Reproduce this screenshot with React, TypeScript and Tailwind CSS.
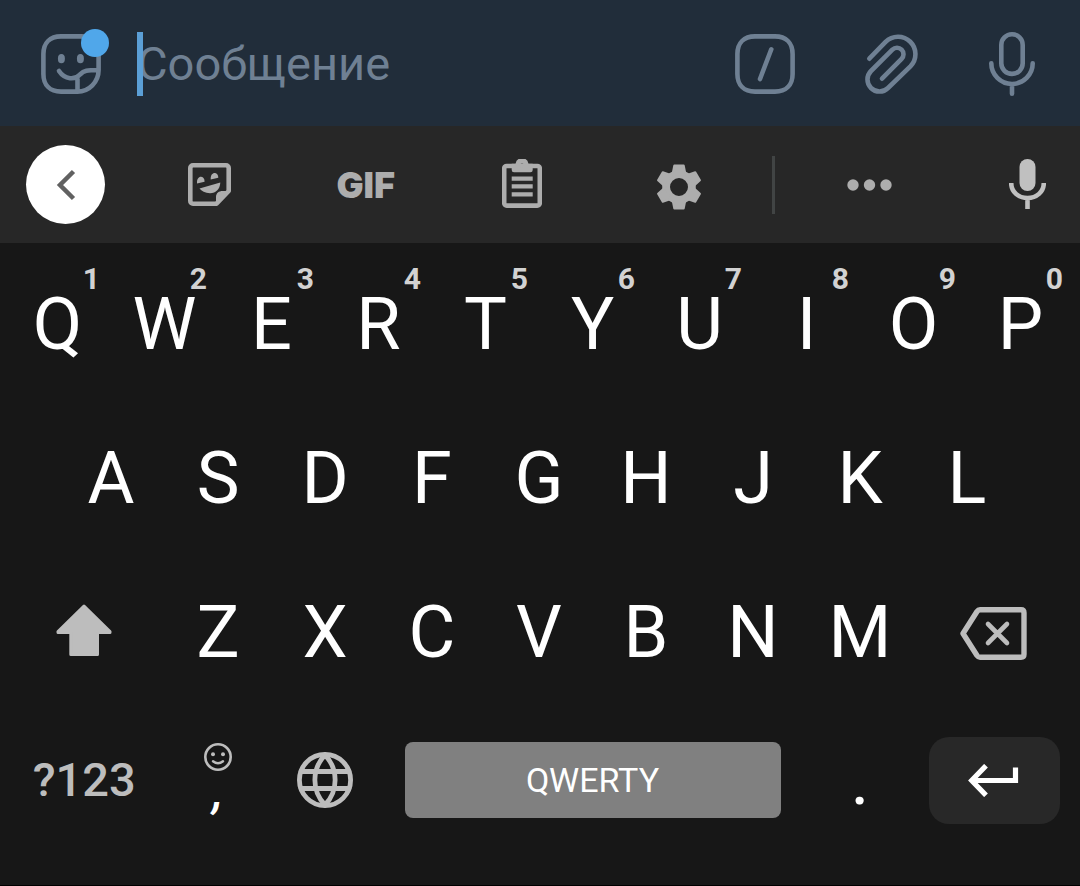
import { useState } from "react";
import type { ReactNode } from "react";
import { clsx } from "clsx";

const TOP_ROW = ["Q", "W", "E", "R", "T", "Y", "U", "I", "O", "P"];
const HOME_ROW = ["A", "S", "D", "F", "G", "H", "J", "K", "L"];
const BOTTOM_ROW = ["Z", "X", "C", "V", "B", "N", "M"];

interface IconProps {
  width: number;
  height: number;
  children: ReactNode;
}

function Icon({ width, height, children }: IconProps) {
  return (
    <svg
      width={width}
      height={height}
      viewBox={`0 0 ${width} ${height}`}
      fill="none"
      stroke="currentColor"
      strokeLinecap="round"
      className="shrink-0"
      aria-hidden="true"
    >
      {children}
    </svg>
  );
}

// Message field icons

function StickerIcon() {
  return (
    <Icon width={60} height={60}>
      <path
        d="M36.5 57.6H20C9 57.6 2.4 51 2.4 40V20C2.4 9 9 2.4 20 2.4H40C51 2.4 57.6 9 57.6 20V36C57.6 48 48 57.6 36.5 57.6V45M18 37C24 46 34 46 39 40.5C43 36.5 46 36 57 36"
        strokeWidth={4.6}
      />
      <g fill="currentColor" stroke="none">
        <ellipse cx={20.4} cy={24.7} rx={3.5} ry={4.6} />
        <ellipse cx={39.4} cy={24.7} rx={3.5} ry={4.6} />
      </g>
    </Icon>
  );
}

function CommandIcon() {
  return (
    <Icon width={60} height={60}>
      <path
        d="M20 2.4H40C51 2.4 57.6 9 57.6 20V40C57.6 51 51 57.6 40 57.6H20C9 57.6 2.4 51 2.4 40V20C2.4 9 9 2.4 20 2.4ZM36.3 15.3L25 45"
        strokeWidth={4.6}
      />
    </Icon>
  );
}

function ClipIcon() {
  return (
    <Icon width={53} height={60}>
      <path
        d="M4.3 24.7L20.6 7.9A17.4 17.4 0 0 1 45.4 32.4L23 54A12 12 0 0 1 6 37L27.4 15.6A6.5 6.5 0 0 1 36.6 24.8L17 44.7"
        strokeWidth={4.6}
      />
    </Icon>
  );
}

function VoiceIcon() {
  return (
    <Icon width={46} height={64}>
      <rect x={12.3} y={2.3} width={21.4} height={39.6} rx={10.7} strokeWidth={4.6} />
      <path d="M2.3 31.3A20.7 20.7 0 0 0 43.7 31.3M23 52V61.7" strokeWidth={4.6} />
    </Icon>
  );
}

// Suggestion strip icons

function BackIcon() {
  return (
    <Icon width={26} height={34}>
      <path d="M20.5 3.5L7 17L20.5 30.5" strokeWidth={4.5} strokeLinecap="butt" />
    </Icon>
  );
}

function StickerPackIcon() {
  return (
    <Icon width={43} height={43}>
      <path
        d="M5 2.3H38A2.7 2.7 0 0 1 40.7 5V28L28.5 40.7H5A2.7 2.7 0 0 1 2.3 38V5A2.7 2.7 0 0 1 5 2.3Z"
        strokeWidth={4.6}
        strokeLinejoin="round"
      />
      <g fill="currentColor" stroke="none">
        <path d="M28 42V34C28 30 31 28 34.5 28H42Z" />
        <path d="M9 20.5C8.3 11.5 16.8 12 16.6 18.7Z" />
        <path d="M22.7 16.5C22 8 30.5 8 30.3 14.7Z" />
        <path d="M11.5 25.5L32.3 19.5C32 26 28 30.2 22 30.2C17 30.2 13.5 28 11.5 25.5Z" />
      </g>
    </Icon>
  );
}

function ClipboardIcon() {
  return (
    <Icon width={40} height={52}>
      <rect x={2.2} y={7} width={35.6} height={39.6} rx={2.5} strokeWidth={4.6} />
      <path
        d="M13.5 4.7A6.6 6.6 0 0 1 26.5 4.7H30.7V11A2.3 2.3 0 0 1 28.4 13.3H12A2.3 2.3 0 0 1 9.7 11V4.7ZM20 4.6A2.1 2.1 0 1 0 20 8.8A2.1 2.1 0 1 0 20 4.6Z"
        fill="currentColor"
        fillRule="evenodd"
        stroke="none"
      />
      <path d="M9.7 19.7H30.7M9.7 27.3H30.7M9.7 35.3H30.7" strokeWidth={4.2} strokeLinecap="butt" />
    </Icon>
  );
}

function GearIcon() {
  return (
    <Icon width={46} height={50}>
      <circle cx={23} cy={27} r={12.9} strokeWidth={7.8} />
      {[0, 60, 120, 180, 240, 300].map((angle) => (
        <path
          key={angle}
          d="M18.3 5.5H27.7L29.5 14.5H16.5Z"
          transform={`rotate(${angle} 23 27)`}
          fill="currentColor"
          strokeWidth={2}
          strokeLinejoin="round"
        />
      ))}
    </Icon>
  );
}

function MoreIcon() {
  return (
    <Icon width={45} height={12}>
      <g fill="currentColor" stroke="none">
        <circle cx={6} cy={6} r={5.7} />
        <circle cx={22.5} cy={6} r={5.7} />
        <circle cx={39} cy={6} r={5.7} />
      </g>
    </Icon>
  );
}

function MicIcon() {
  return (
    <Icon width={37} height={52}>
      <rect x={10.5} y={0} width={16} height={32} rx={8} fill="currentColor" stroke="none" />
      <path
        d="M2.2 24C2.2 33 9.5 39 18.5 39S34.8 33 34.8 24M18.5 39V50"
        strokeWidth={4.6}
        strokeLinecap="butt"
      />
    </Icon>
  );
}

// Key icons

function ShiftIcon() {
  return (
    <Icon width={56} height={58}>
      <path
        d="M28 2L54 27.5V28.5H41.5V50.5H14.8V28.5H2V27.5Z"
        fill="currentColor"
        strokeWidth={3}
        strokeLinejoin="round"
      />
    </Icon>
  );
}

function BackspaceIcon() {
  return (
    <Icon width={67} height={53}>
      <path
        d="M3 26.5L17 4.5Q18.2 2.8 20 2.8H61Q64 2.8 64 5.8V47.2Q64 50.2 61 50.2H20Q18.2 50.2 17 48.5Z"
        strokeWidth={5.4}
        strokeLinejoin="round"
      />
      <path d="M28 17L47 36M47 17L28 36" strokeWidth={4.6} />
    </Icon>
  );
}

function SmileyIcon() {
  return (
    <Icon width={28} height={28}>
      <circle cx={14} cy={14} r={12.7} strokeWidth={2.6} />
      <path d="M9 18.3Q14 22.3 19 18.3" strokeWidth={2.4} />
      <g fill="currentColor" stroke="none">
        <circle cx={9} cy={11.3} r={2} />
        <circle cx={19} cy={11.3} r={2} />
      </g>
    </Icon>
  );
}

function GlobeIcon() {
  return (
    <Icon width={56} height={56}>
      <circle cx={28} cy={28} r={25.6} strokeWidth={4.8} />
      <path
        d="M4 19.5H52M4 36.5H52M28 3C14.5 17 14.5 39 28 53C41.5 39 41.5 17 28 3Z"
        strokeWidth={4.8}
      />
    </Icon>
  );
}

function EnterIcon() {
  return (
    <Icon width={52} height={33}>
      <path
        d="M18 1.7L3.7 16.5L18 31.3M3.7 16.5H47.5V3.5"
        strokeWidth={5.2}
        strokeLinecap="butt"
      />
    </Icon>
  );
}

function LetterKey({
  label,
  hint,
  onPress
}: {
  label: string;
  hint?: string;
  onPress: (label: string) => void;
}) {
  return (
    <button
      onClick={() => onPress(label)}
      className="relative col-span-2 flex h-full items-center justify-center text-7xl leading-none text-white"
    >
      {label}
      {hint && (
        <span className="absolute top-4 right-[11px] text-3xl leading-none font-bold text-[#d2d2d2]">
          {hint}
        </span>
      )}
    </button>
  );
}

function MessageBar({
  value,
  onChange
}: {
  value: string;
  onChange: (value: string) => void;
}) {
  return (
    <div className="flex h-[126px] items-center bg-[#212d3a] pt-[2px] pr-[45px] pl-[41px] text-[#6f8093]">
      <button aria-label="Стикеры" className="relative shrink-0">
        <StickerIcon />
        <span className="absolute -top-[5px] -right-2 size-7 rounded-full bg-[#50a7ea]" />
      </button>
      <div className="relative ml-9 min-w-0 flex-1">
        <input
          value={value}
          onChange={(e) => onChange(e.target.value)}
          placeholder="Сообщение"
          aria-label="Сообщение"
          className="block h-16 w-full bg-transparent text-[47px] text-white caret-[#5b9fd6] outline-none placeholder:text-[#6f8093]"
        />
        {value === "" && (
          <span className="absolute inset-y-0 left-0 w-[6px] bg-[#5b9fd6]" />
        )}
      </div>
      <button aria-label="Команды">
        <CommandIcon />
      </button>
      <button aria-label="Прикрепить" className="ml-[70px]">
        <ClipIcon />
      </button>
      <button aria-label="Голосовое сообщение" className="ml-[71px]">
        <VoiceIcon />
      </button>
    </div>
  );
}

function ToolStrip() {
  const cell = "flex items-center justify-center";

  return (
    <div className="flex h-[117px] items-center bg-[#272727] text-[#adadad]">
      <div className={clsx(cell, "w-[131px]")}>
        <button
          aria-label="Назад"
          className={clsx(cell, "size-[79px] rounded-full bg-white text-[#616161]")}
        >
          <BackIcon />
        </button>
      </div>
      <div className="mr-[2px] grid flex-1 grid-cols-4">
        <button aria-label="Стикеры" className={cell}>
          <StickerPackIcon />
        </button>
        <button className={clsx(cell, "font-[Inter,sans-serif] text-4xl leading-none font-black")}>
          GIF
        </button>
        <button aria-label="Буфер обмена" className={cell}>
          <ClipboardIcon />
        </button>
        <button aria-label="Настройки" className={cell}>
          <GearIcon />
        </button>
      </div>
      <div className="mx-[13px] h-[58px] w-[3px] bg-[#414444]" />
      <button aria-label="Ещё" className={clsx(cell, "w-[162px]")}>
        <MoreIcon />
      </button>
      <button aria-label="Голосовой ввод" className={clsx(cell, "mr-[34px] ml-[59px] text-[#c0c0c0]")}>
        <MicIcon />
      </button>
    </div>
  );
}

export default function App() {
  const [message, setMessage] = useState("");

  const type = (text: string) => setMessage((prev) => prev + text);
  const row = "grid h-[154px] grid-cols-20 items-center";
  const key = "flex h-full items-center justify-center";

  return (
    <div className="flex min-h-screen flex-col bg-[#171717] font-[Roboto,sans-serif]">
      <MessageBar value={message} onChange={setMessage} />
      <ToolStrip />

      <div className="flex-1 border-b border-black pt-[5px] pr-[6px] pl-1 text-[#bdbdbd]">
        <div className={row}>
          {TOP_ROW.map((letter, i) => (
            <LetterKey
              key={letter}
              label={letter}
              hint={String((i + 1) % 10)}
              onPress={type}
            />
          ))}
        </div>

        <div className={row}>
          <span />
          {HOME_ROW.map((letter) => (
            <LetterKey key={letter} label={letter} onPress={type} />
          ))}
        </div>

        <div className={row}>
          <button aria-label="Shift" className={clsx(key, "col-span-3")}>
            <ShiftIcon />
          </button>
          {BOTTOM_ROW.map((letter) => (
            <LetterKey key={letter} label={letter} onPress={type} />
          ))}
          <button
            aria-label="Backspace"
            onClick={() => setMessage((prev) => prev.slice(0, -1))}
            className={clsx(key, "col-span-3")}
          >
            <BackspaceIcon />
          </button>
        </div>

        <div className="grid h-[140px] grid-cols-20 items-center">
          <button className={clsx(key, "col-span-3 text-[47px] font-medium")}>
            ?123
          </button>
          <button
            onClick={() => type(",")}
            className="col-span-2 flex h-full flex-col items-center pt-[33px]"
          >
            <SmileyIcon />
            <span className="text-5xl leading-10 font-medium text-white italic">,</span>
          </button>
          <button aria-label="Язык" className={clsx(key, "col-span-2")}>
            <GlobeIcon />
          </button>
          <div className="col-span-8 px-[26px]">
            <button
              onClick={() => type(" ")}
              className="h-[76px] w-full rounded-lg bg-[#808080] text-[34px] leading-none text-white"
            >
              QWERTY
            </button>
          </div>
          <button
            onClick={() => type(".")}
            className={clsx(key, "col-span-2 text-7xl leading-none text-white")}
          >
            .
          </button>
          <div className="col-span-3 pr-[14px] pl-[15px]">
            <button
              aria-label="Enter"
              className="flex h-[87px] w-full items-center justify-center rounded-[20px] bg-[#282828] text-white"
            >
              <EnterIcon />
            </button>
          </div>
        </div>
      </div>
    </div>
  );
}
